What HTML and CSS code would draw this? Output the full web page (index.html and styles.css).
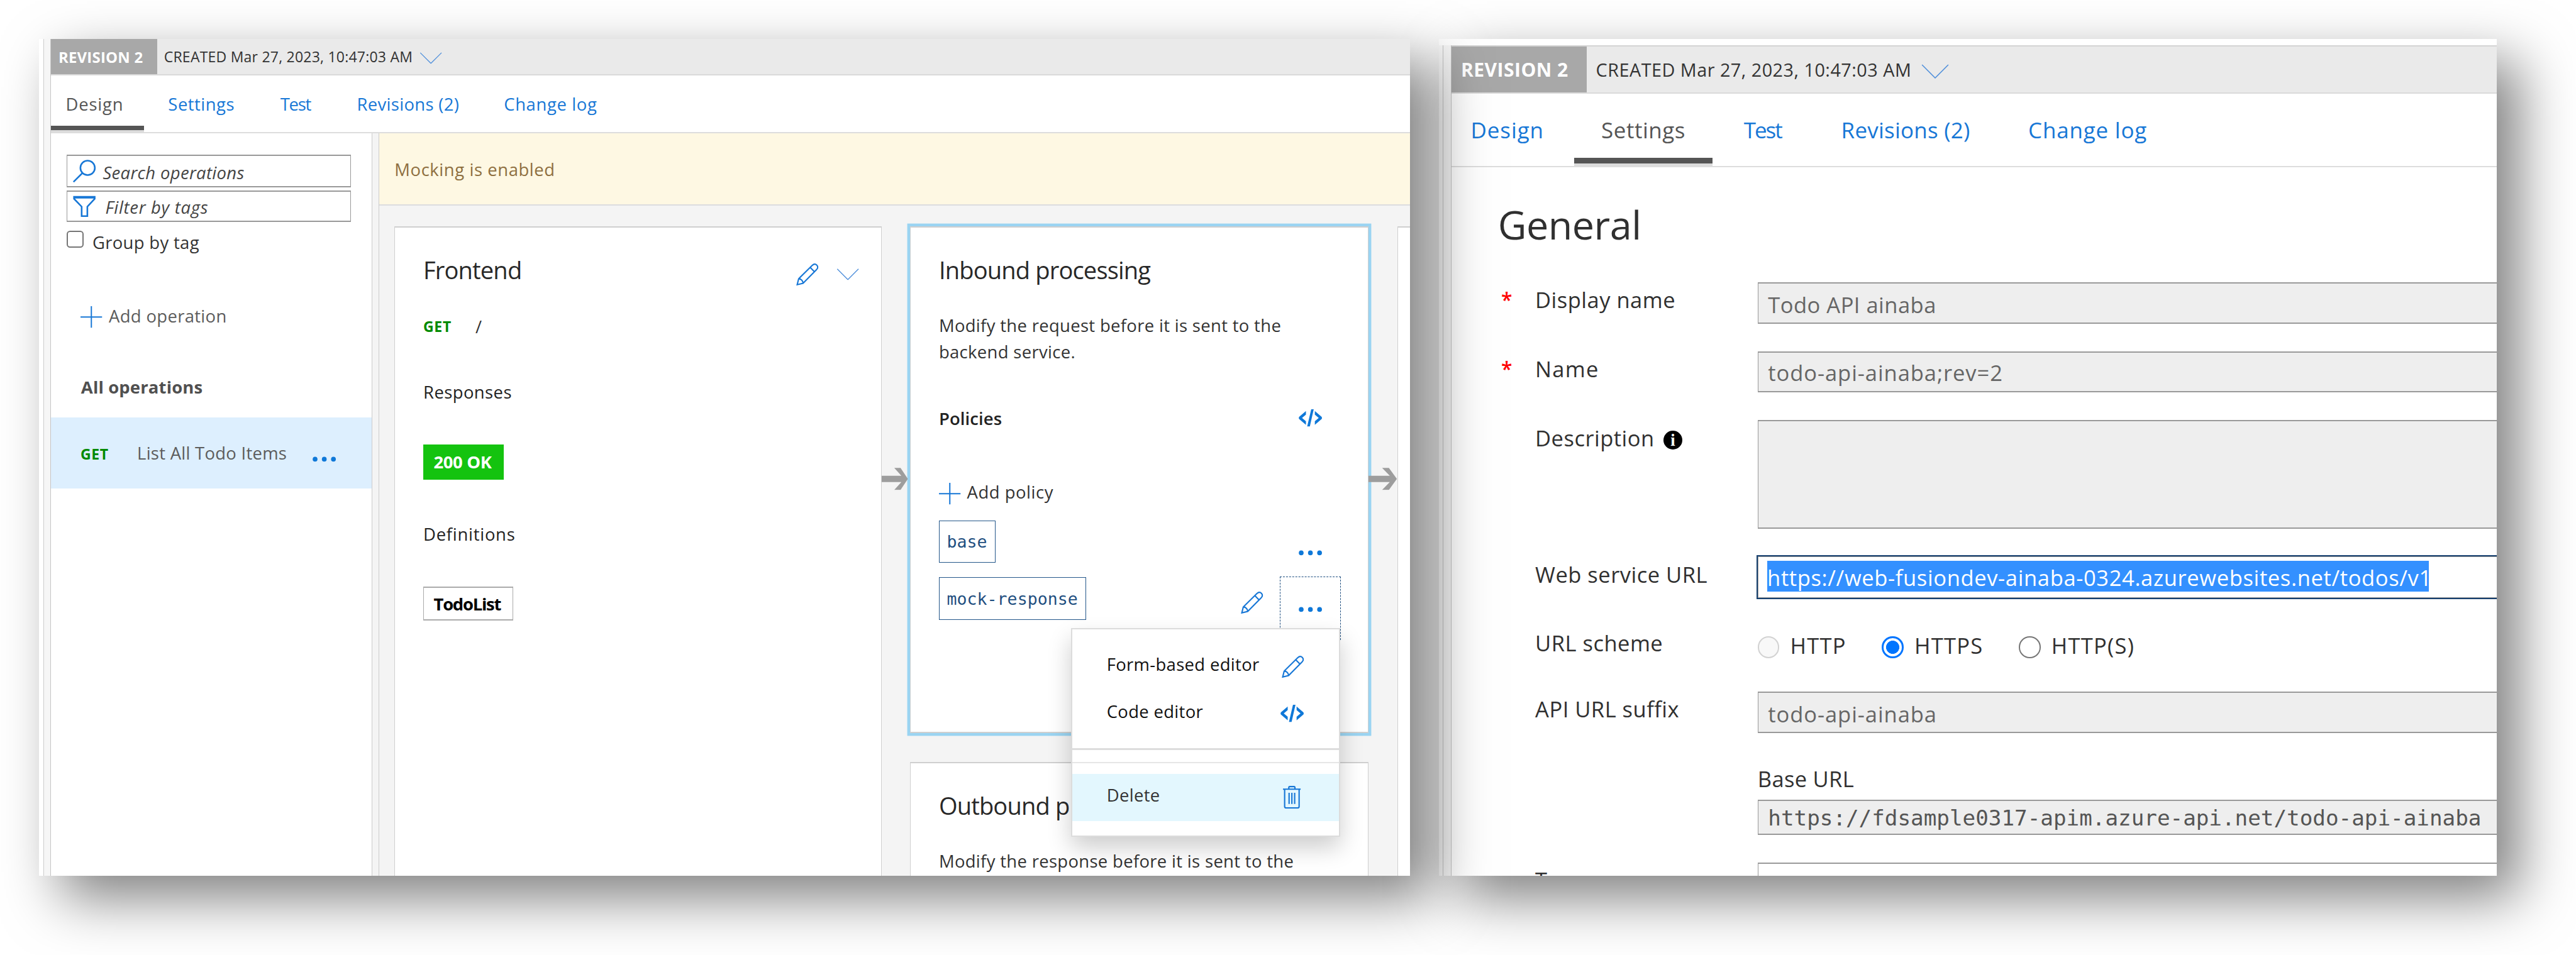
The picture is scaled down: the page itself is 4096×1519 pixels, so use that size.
FILE: index.html
```html
<!DOCTYPE html>
<html lang="en">
<head>
<meta charset="utf-8">
<title>API Management – Design and Settings</title>
<link rel="stylesheet" href="styles.css">
</head>
<body>
<svg class="sprite" aria-hidden="true">
  <symbol id="pencil" viewBox="0 0 40 40"><path d="M1.8 38.2 4.4 27.6 28.6 3.6C31.6.8 34.8.8 37 3s2.200 5.400-.6 8.400L12.400 35.600zM4.400 27.600c4 0 8 3.500 8 8M25 7.200l7.800 7.800"/></symbol>
  <symbol id="chevron" viewBox="0 0 42 22"><path d="M1 1l20 20L41 1"/></symbol>
  <symbol id="plus" viewBox="0 0 38 38"><path d="M19 0v38M0 19h38"/></symbol>
  <symbol id="code" viewBox="0 0 42 31"><path d="M13 3v6.500l-7 6 7 6V28L.8 17.500q-1.200-2 0-4zM29 3v6.500l7 6-7 6V28l12.200-10.500q1.200-2 0-4zM22.500 0H27l-7 31h-4.800z"/></symbol>
  <symbol id="dots" viewBox="0 0 42 10"><circle cx="4.500" cy="5" r="4.300"/><circle cx="21" cy="5" r="4.300"/><circle cx="37.500" cy="5" r="4.300"/></symbol>
  <symbol id="trash" viewBox="0 0 32 41"><path d="M0 6h32M10.500 6V3q0-1.700 1.700-1.700h7.600q1.700 0 1.700 1.700v3M3 6v31q0 2.700 2.700 2.700h20.600q2.700 0 2.700-2.700V6M11 12.500v20M16 12.500v20M21 12.500v20"/></symbol>
  <symbol id="arrow" viewBox="0 0 48 40" preserveAspectRatio="none"><path d="M0 14.300h36L23 .2h11.500L48 20 34.500 39.800H23l13-14.100H0z"/></symbol>
</svg>

<main class="stage">
  <section class="panel design">
    <div class="edge"></div>
    <div class="panel-body">
      <header class="revision">
        <strong>REVISION 2</strong>
        <span>CREATED Mar 27, 2023, 10:47:03 AM</span>
        <svg class="chev"><use href="#chevron"/></svg>
      </header>
      <nav class="tabs">
        <a class="design-tab active">Design</a><a class="settings-tab">Settings</a><a class="test-tab">Test</a><a class="revisions-tab">Revisions (2)</a><a class="log-tab">Change log</a>
      </nav>
      <div class="columns">
        <aside class="sidebar">
          <div class="search"><svg class="i-search" viewBox="0 0 42 42"><circle cx="27" cy="15" r="13.300"/><path d="M17.500 24.500 1 41"/></svg><span class="search-text">Search operations</span></div>
          <div class="search filter"><svg class="i-filter" viewBox="0 0 42 39"><path d="M2 2h38v3.500L26.500 20v17.500H16V20L2 5.500zM2 3.500h38"/></svg><span class="filter-text">Filter by tags</span></div>
          <div class="group"><span class="checkbox"></span><span>Group by tag</span></div>
          <div class="add-operation"><svg class="i-plus"><use href="#plus"/></svg><span>Add operation</span></div>
          <div class="all">All operations</div>
          <div class="operation"><b class="get">GET</b><span>List All Todo Items</span><svg class="i-dots"><use href="#dots"/></svg></div>
        </aside>
        <div class="gutter"></div>
        <div class="workspace">
          <div class="notice">Mocking is enabled</div>
          <div class="canvas">
            <article class="card frontend">
              <div class="title-row"><h2>Frontend</h2><svg class="i-pencil"><use href="#pencil"/></svg><svg class="i-chevron"><use href="#chevron"/></svg></div>
              <div class="route"><b class="get">GET</b><span>/</span></div>
              <h3 class="responses">Responses</h3>
              <span class="status">200 OK</span>
              <h3 class="definitions">Definitions</h3>
              <span class="definition">TodoList</span>
            </article>
            <svg class="flow"><use href="#arrow"/></svg>
            <div class="stack">
              <article class="card inbound">
                <h2>Inbound processing</h2>
                <p class="request">Modify the request before it is sent to the<br>backend service.</p>
                <div class="policies"><h3>Policies</h3><span class="cell"><svg class="i-code"><use href="#code"/></svg></span></div>
                <div class="add-policy"><svg class="i-plus"><use href="#plus"/></svg><span>Add policy</span></div>
                <div class="policy"><code>base</code><span class="cell low"><svg class="i-dots"><use href="#dots"/></svg></span></div>
                <div class="policy"><code>mock-response</code><svg class="i-pencil"><use href="#pencil"/></svg>
                  <div class="cell low focus"><svg class="i-dots"><use href="#dots"/></svg>
                    <div class="menu">
                      <div class="item"><span>Form-based editor</span><svg class="i-pencil"><use href="#pencil"/></svg></div>
                      <div class="item"><span>Code editor</span><svg class="i-code"><use href="#code"/></svg></div>
                      <div class="divider"></div>
                      <div class="item hovered"><span>Delete</span><svg class="i-trash"><use href="#trash"/></svg></div>
                    </div>
                  </div>
                </div>
              </article>
              <article class="card outbound">
                <h2>Outbound processing</h2>
                <p class="response">Modify the response before it is sent to the</p>
              </article>
            </div>
            <svg class="flow second"><use href="#arrow"/></svg>
            <article class="card backend"></article>
          </div>
        </div>
      </div>
    </div>
  </section>

  <section class="panel settings">
    <div class="edge"></div>
    <div class="panel-body">
      <header class="revision">
        <strong>REVISION 2</strong>
        <span>CREATED Mar 27, 2023, 10:47:03 AM</span>
        <svg class="chev"><use href="#chevron"/></svg>
      </header>
      <nav class="tabs">
        <a class="design-tab">Design</a><a class="settings-tab active">Settings</a><a class="test-tab">Test</a><a class="revisions-tab">Revisions (2)</a><a class="log-tab">Change log</a>
      </nav>
      <div class="form">
        <h1>General</h1>
        <div class="row first"><i>*</i><label>Display name</label><div class="input">Todo API ainaba</div></div>
        <div class="row name"><i>*</i><label class="short">Name</label><div class="input wide">todo-api-ainaba;rev=2</div></div>
        <div class="row"><i></i><label>Description<span class="info">i</span></label><div class="input area"></div></div>
        <div class="row service"><i></i><label>Web service URL</label><div class="input focused"><span class="selection">https://web-fusiondev-ainaba-0324.azurewebsites.net/todos/v1</span></div></div>
        <div class="row scheme"><i></i><label>URL scheme</label>
          <div class="radios"><span class="choice http"><span class="radio disabled"></span>HTTP</span><span class="choice https"><span class="radio checked"></span>HTTPS</span><span class="choice both"><span class="radio"></span>HTTP(S)</span></div></div>
        <div class="row suffix"><i></i><label>API URL suffix</label>
          <div><div class="input wide">todo-api-ainaba</div><div class="base-label">Base URL</div><div class="input mono">https://fdsample0317-apim.azure-api.net/todo-api-ainaba</div></div></div>
        <div class="row tags"><i></i><label>Tags</label><div class="input empty">e.g. Booking</div></div>
      </div>
    </div>
  </section>
</main>
</body>
</html>
```
FILE: styles.css
```css
/* 462.6rem span the window's width */
html { font-size: calc(100vw / 462.6); }
*, *::after { box-sizing: border-box; }
body {
  margin: 0;
  height: 100vh;
  overflow: hidden;
  background: #fff;
  color: #333;
  font-family: "Open Sans", "Noto Sans", sans-serif;
}
h1, h2, h3, p { margin: 0; font-weight: 400; }
svg { display: block; flex: none; fill: none; overflow: visible; }
.sprite { position: absolute; width: 0; height: 0; }

.stage { display: flex; padding: 7rem 0 0 7rem; gap: 5.2rem; }
.panel { display: flex; height: 150.3rem; flex: none; box-shadow: 4rem 4rem 9.4rem rgba(0, 0, 0, .5); background: #fff; }
.panel-body { flex: 1; min-width: 0; overflow: hidden; }
.design { position: relative; z-index: 1; width: 246.2rem; font-size: 3.1rem; letter-spacing: .012em; }
.settings { width: 190rem; font-size: 3.9rem; letter-spacing: .014em; }

.edge { flex: none; background: #f6f6f6; border-right: 1px solid #c4c4c4; }
.design .edge { width: 2.15rem; border-left: .9rem solid #fff; box-shadow: inset 1px 0 #ccc; }
.settings .edge { width: 2.3rem; margin-top: 1.1rem; border-left: .75rem solid #f8f8f8; box-shadow: inset 1px 0 #c4c4c4; }

/* revision strip */
.revision { display: flex; align-items: center; background: #eaeaea; border-bottom: .24rem solid #dadada; white-space: nowrap; }
.revision strong { display: flex; align-items: center; height: 100%; color: #fff; background: #a8a8a8; }
.chev { stroke: #4f8fdb; stroke-width: 1.5; }
.design .revision { height: 6.6rem; font-size: 2.6rem; }
.design .revision strong { width: 19.1rem; padding-left: 1.35rem; margin-right: 1.2rem; font-size: 2.7rem; letter-spacing: .01em; }
.design .revision span { letter-spacing: .0095em; width: 45.9rem; }
.design .chev { width: 4.1rem; height: 2.1rem; margin-top: .5rem; }
.settings .revision { height: 8.7rem; margin-top: 1.1rem; border-top: .24rem solid #d4d4d4; font-size: 3.25rem; }
.settings .revision strong { width: 24.3rem; padding-left: 1.65rem; margin-right: 1.6rem; font-size: 3.4rem; letter-spacing: .015em; }
.settings .revision span { letter-spacing: .0174em; width: 58.3rem; }
.settings .chev { width: 5.2rem; height: 2.6rem; margin-top: .7rem; }

/* tabs */
.tabs { display: flex; border-bottom: .24rem solid #ddd; color: #1777d6; }
.tabs a { position: relative; flex: none; }
.tabs .active { color: #555; }
.tabs .active::after { content: ""; position: absolute; background: #555; border-bottom: .6rem solid #dcdcdc; }
.tabs .test-tab { letter-spacing: -.046em; }
.tabs .log-tab { letter-spacing: .023em; }
.design .tabs { height: 10.4rem; padding-left: 2.65rem; line-height: 10.3rem; }
.design .design-tab { width: 18.4rem; letter-spacing: .03em; }
.design .settings-tab { width: 20.15rem; letter-spacing: .0176em; }
.design .test-tab { width: 13.75rem; }
.design .revisions-tab { width: 26.4rem; }
.design .tabs .active::after { left: -2.65rem; width: 16.7rem; top: 9rem; height: 1.4rem; border-bottom-width: .65rem; }
.settings .tabs { height: 13.2rem; padding-left: 3.4rem; line-height: 13rem; font-size: 3.95rem; }
.settings .design-tab { width: 23.45rem; letter-spacing: .027em; }
.settings .settings-tab { width: 25.6rem; letter-spacing: .0158em; }
.settings .test-tab { width: 17.5rem; letter-spacing: -.057em; }
.settings .revisions-tab { width: 33.6rem; letter-spacing: .0066em; }
.settings .tabs .active::after { left: -4.9rem; width: 24.9rem; top: 11.6rem; height: 1.4rem; border-bottom-width: .55rem; }

/* operations sidebar */
.columns { display: flex; height: 133.3rem; }
.sidebar { flex: none; width: 57.75rem; padding-top: 3.8rem; border-right: 1px solid #ccc; }
.search { display: flex; align-items: center; margin-left: 2.8rem; width: 51.1rem; height: 5.9rem; padding-left: 1rem; border: solid #999; border-width: .24rem .2rem; font-style: italic; color: #444; }
.filter { margin-top: .5rem; height: 5.7rem; }
.i-search { width: 4.1rem; height: 4.1rem; stroke: #1777d6; stroke-width: 3; margin-right: 1.3rem; }
.i-filter { width: 4.1rem; height: 3.9rem; stroke: #1777d6; stroke-width: 3; margin-right: 1.75rem; }
.search-text { padding-top: .45rem; }
.filter-text { letter-spacing: .026em; padding-top: .3rem; }
.group { display: flex; align-items: flex-start; margin: 1.5rem 0 0 2.8rem; line-height: 4.2rem; gap: 1.55rem; }
.checkbox { width: 3.1rem; height: 3.1rem; border: 2px solid #767676; border-radius: .6rem; }
.add-operation { display: flex; align-items: center; margin: 9.4rem 0 0 5.3rem; height: 4rem; gap: 1.2rem; color: #5c5c5c; }
.add-operation span { margin-top: -.4rem; }
.i-plus { width: 3.9rem; height: 3.9rem; stroke: #1777d6; stroke-width: 2.2; }
.all { margin: 8.4rem 0 0 5.4rem; line-height: 4.2rem; font-weight: 700; letter-spacing: .0055em; color: #505050; }
.operation { display: flex; align-items: center; margin-top: 3.4rem; height: 12.8rem; padding-left: 5.3rem; background: #ddeffe; color: #5c5c5c; }
.operation span { margin-left: 5.1rem; width: 31.5rem; letter-spacing: .01em; }
.get { font-size: 2.6rem; letter-spacing: .03em; color: #008a00; }
.operation .get { padding-top: .4rem; }
.i-dots { width: 4.2rem; height: 1rem; fill: #0f78d8; }
.operation .i-dots { margin-top: 2.3rem; }
.gutter { flex: none; width: 1.2rem; background: #f4f4f4; border-right: 1px solid #ccc; }

/* workspace */
.workspace { flex: 1; min-width: 0; background: #f4f4f4; }
.notice { height: 12.9rem; line-height: 13rem; padding-left: 2.75rem; background: #fef8e3; border-bottom: .24rem solid #dcdcde; color: #8e6f40; letter-spacing: .021em; }
.canvas { display: flex; align-items: flex-start; padding: 3.8rem 0 0 2.7rem; }
.card { background: #fff; border: solid #cfcfcf; border-width: .24rem .2rem; color: #333; }
.card h2 { font-size: 4.3rem; line-height: 5rem; letter-spacing: -.022em; color: #282828; }
.card h3 { font-size: 3.1rem; line-height: 4.2rem; font-weight: 500; color: #222; letter-spacing: .0156em; }
.frontend { flex: none; width: 87.5rem; height: 125rem; padding: 5.05rem 3.9rem 0 5.1rem; }
.title-row { display: flex; align-items: center; height: 5rem; }
.title-row h2 { flex: 1; }
.i-pencil { width: 4rem; height: 4rem; stroke: #1777d6; stroke-width: 2.4; }
.title-row .i-pencil { margin-top: 1.6rem; }
.title-row .i-chevron { margin: 1.6rem 0 0 3.2rem; width: 4.1rem; height: 2.1rem; stroke: #4f8fdb; stroke-width: 1.6; }
.route { display: flex; align-items: center; height: 4.2rem; margin-top: 5.6rem; }
.route span { margin-left: 4.3rem; }
.responses { margin-top: 7.55rem; }
.status, .definition { display: block; width: fit-content; font-weight: 700; }
.status { margin-top: 7.3rem; height: 6.3rem; line-height: 6.3rem; width: 14.4rem; padding-left: 1.85rem; background: #14c30f; color: #fff; letter-spacing: -.012em; }
.card .definitions { margin-top: 7.7rem; letter-spacing: .027em; }
.definition { margin-top: 7.35rem; height: 6.15rem; line-height: 5.9rem; width: 16.1rem; padding-left: 1.75rem; border: solid #aaa; border-width: .24rem .2rem; color: #000; letter-spacing: -.046em; }
.flow { position: relative; width: 5.1rem; height: 4rem; margin-top: 43.3rem; fill: #9d9d9d; }
.flow:not(.second) { width: 4.7rem; margin-right: .4rem; }
.stack { flex: none; width: 82.4rem; }
.inbound { height: 91rem; padding: 5.05rem 4.9rem 0 5.1rem; box-shadow: 0 0 0 .5rem #9ad4f2; }
.card p { margin-top: 5.15rem; line-height: 4.7rem; white-space: nowrap; }
.policies { display: flex; justify-content: space-between; align-items: center; margin-top: 7.5rem; height: 4.2rem; }
.card .policies h3 { font-weight: 600; letter-spacing: .004em; }
.cell { display: flex; align-items: center; justify-content: center; width: 10.9rem; }
.i-code { width: 4.2rem; height: 3.1rem; fill: #0f78d8; }
.add-policy { display: flex; align-items: center; margin-top: 9.2rem; height: 4rem; gap: 1.15rem; letter-spacing: .019em; }
.add-policy .i-plus { margin-top: .6rem; }
.policy { display: flex; align-items: center; height: 7.65rem; margin-top: 2.6rem; }
.add-policy + .policy { margin-top: 3.05rem; }
.policy code { display: flex; align-items: center; height: 100%; padding: 0 1.35rem 0 1.3rem; margin-right: auto; border: .2rem solid #24578a; color: #1f4f80; font: 3rem "DejaVu Sans Mono", monospace; letter-spacing: .002em; }
.policy > .i-pencil { margin: 1.4rem 3.1rem 0 0; }
.low .i-dots { margin-top: 4rem; }
.focus { position: relative; align-self: flex-start; margin-top: -.2rem; height: 11.4rem; padding-bottom: 3.5rem; border: .2rem dashed #1f4f80; }

/* context menu over the policies */
.menu { position: absolute; right: -.05rem; top: 9.2rem; width: 48.4rem; padding: 2.5rem 0 2.6rem; background: #fff; border: .24rem solid #dcdcdc; box-shadow: 0 2rem 4rem rgba(0, 0, 0, .2); color: #111; }
.item { display: flex; align-items: center; justify-content: space-between; height: 8.4rem; padding: 0 6.3rem 0 6.2rem; }
.item span { padding-bottom: .8rem; }
.divider { height: 2.7rem; margin: 2rem 0; border-top: .34rem solid #ddd; border-bottom: .24rem solid #e6e6e6; }
.hovered { background: #e3f7fe; color: #333; }
.i-trash { width: 3.2rem; height: 4.1rem; margin-right: .6rem; stroke: #1777d6; stroke-width: 2.4; }

.outbound { margin-top: 5.2rem; height: 40rem; padding: 5.1rem 0 0 5.1rem; }
.backend { flex: 1; height: 125rem; border-right: 0; }

/* settings form */
.form { padding: 6.35rem 0 0 8.3rem; height: 140rem; color: #303030; }
h1 { font-size: 7.1rem; line-height: 8rem; letter-spacing: -.008em; }
.row { display: grid; grid-template-columns: 6.7rem 39.95rem 1fr; margin-top: 5rem; align-items: start; }
.row.first { margin-top: 6.35rem; }
.row i { padding: .1rem 0 0 .6rem; font-style: normal; font-weight: 600; font-size: 3.6rem; line-height: 6.2rem; color: #f00; }
label { display: flex; align-items: center; padding-top: .15rem; line-height: 6.2rem; }
label.short { letter-spacing: .037em; }
.input { height: 7.5rem; padding: .35rem 0 0 1.75rem; line-height: 6.9rem; background: #eee; border: .24rem solid #999; border-width: .24rem 0 .24rem .2rem; color: #666; white-space: nowrap; }
.name { margin-top: 4.95rem; }
.input.wide { letter-spacing: .027em; }
.name .input { height: 7.35rem; padding-top: .15rem; }
.input.area { height: 19.45rem; }
.info { display: grid; place-items: center; width: 3.4rem; height: 3.4rem; margin: .7rem 0 0 1.6rem; border-radius: 50%; background: #000; color: #fff; font: 700 3rem/1 "Liberation Serif", serif; letter-spacing: 0; }
.row.service { margin-top: 4.75rem; }
.service label { padding-top: .45rem; }
.input.focused { height: 7.9rem; margin-left: -.2rem; padding: .8rem 0 0 1.7rem; background: #fff; border: .24rem solid #16406f; border-right: 0; box-shadow: inset 1px 1px #999, inset 0 -1px #999; }
.selection { display: block; width: 118.8rem; height: 5.6rem; line-height: 6rem; background: #3390ff; color: #fff; letter-spacing: .0184em; }
.row.scheme { margin-top: 4.75rem; }
.radios { display: flex; height: 6.2rem; padding-top: 1rem; letter-spacing: .036em; }
.choice { display: flex; align-items: center; gap: 1.95rem; }
.http { width: 22.3rem; }
.https { width: 24.6rem; }
.radio { width: 3.9rem; height: 3.9rem; margin-top: .7rem; border: 2px solid #767676; border-radius: 50%; background: #fff; }
.radio.disabled { border-color: #d2d2d2; background: #f8f8f8; }
.radio.checked { border: .35rem solid #0075ff; background: radial-gradient(circle, #0075ff 1.15rem, #fff 1.22rem); }
.row.suffix { margin-top: 5.5rem; }
.base-label { margin-top: 6.1rem; line-height: 4.2rem; letter-spacing: .009em; }
.input.mono { margin-top: 1.7rem; height: 6.35rem; padding-top: .1rem; line-height: 5.9rem; font-family: "DejaVu Sans Mono", monospace; font-size: 3.87rem; letter-spacing: 0; color: #555; }
.row.tags { margin-top: 4.9rem; }
.input.empty { background: #fff; }
```
